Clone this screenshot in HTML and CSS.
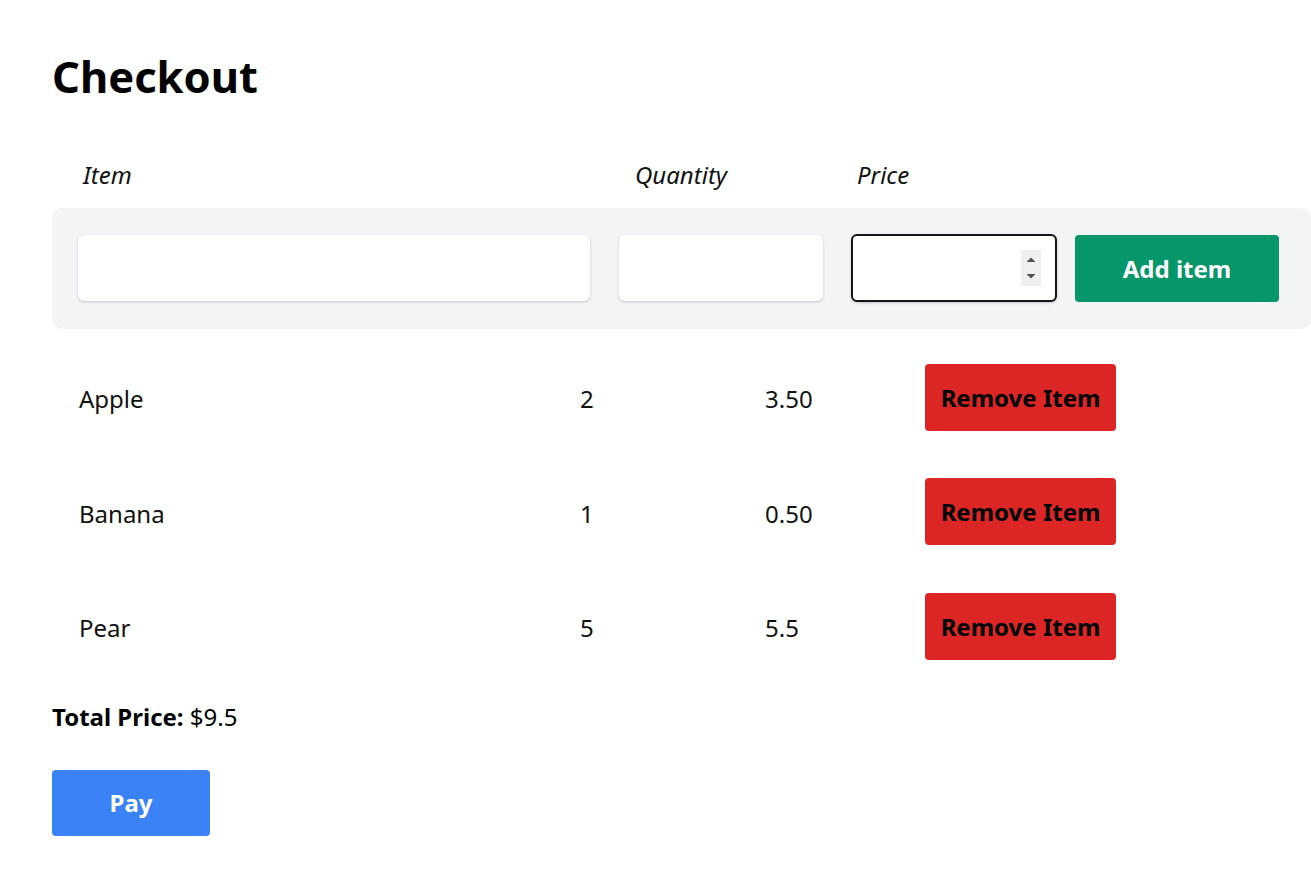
FILE: index.html
```html
<!DOCTYPE html>
<html lang="en">
<head>
<meta charset="utf-8">
<title>Checkout</title>
<link rel="stylesheet" href="styles.css">
</head>
<body>
<main class="page">
  <h1 class="title">Checkout</h1>
  <div class="labels">
    <span>Item</span>
    <span>Quantity</span>
    <span>Price</span>
  </div>
  <form class="form-bar">
    <input class="field field-item" type="text" aria-label="Item">
    <input class="field field-qty" type="text" aria-label="Quantity">
    <div class="price-wrap">
      <input class="field field-price" type="text" aria-label="Price">
      <span class="spinner">
        <svg width="20" height="36" viewBox="0 0 20 36"><path d="M5.5 12 L10 7.5 L14.5 12 Z" fill="#505050"/><path d="M5.5 24 L10 28.5 L14.5 24 Z" fill="#505050"/></svg>
      </span>
    </div>
    <button class="btn btn-add" type="button">Add item</button>
  </form>
  <div class="items">
    <div class="row">
      <span class="name">Apple</span>
      <span class="qty">2</span>
      <span class="price">3.50</span>
      <button class="btn btn-remove" type="button">Remove Item</button>
    </div>
    <div class="row">
      <span class="name">Banana</span>
      <span class="qty">1</span>
      <span class="price">0.50</span>
      <button class="btn btn-remove" type="button">Remove Item</button>
    </div>
    <div class="row">
      <span class="name">Pear</span>
      <span class="qty">5</span>
      <span class="price">5.5</span>
      <button class="btn btn-remove" type="button">Remove Item</button>
    </div>
  </div>
  <p class="total"><strong>Total Price:</strong> $9.5</p>
  <button class="btn btn-pay" type="button">Pay</button>
</main>
</body>
</html>
```
FILE: styles.css
```css
* { box-sizing: border-box; }
html, body { margin: 0; padding: 0; background: #fff; }
body {
  font-family: "Noto Sans", "Open Sans", sans-serif;
  color: #111;
  font-size: 24px;
}
.page {
  padding: 44px 0 0 52px;
}
.title {
  margin: 0;
  font-size: 43.5px;
  line-height: 64px;
  font-weight: 700;
  color: #000;
}
.labels {
  display: grid;
  grid-template-columns: 552px 222px auto;
  padding-left: 31px;
  margin-top: 49px;
  height: 36px;
  line-height: 36px;
  font-style: italic;
  font-size: 24px;
  color: #111;
}
.form-bar {
  display: flex;
  align-items: center;
  width: 1259px;
  margin: 15px 0 0 0;
  padding: 26px 26px 27px 26px;
  background: #f3f4f6;
  border-radius: 10px;
}
.field {
  height: 66px;
  border: 0;
  border-radius: 6px;
  background: #fff;
  box-shadow: 0 1px 3px rgba(0,0,0,0.12), 0 1px 2px rgba(0,0,0,0.08);
  font: inherit;
  padding: 0 12px;
  outline: none;
}
.field-item { width: 512px; margin-right: 29px; }
.field-qty { width: 204px; margin-right: 28px; }
.price-wrap {
  position: relative;
  width: 206px;
  height: 68px;
  margin-right: 18px;
}
.field-price {
  width: 206px;
  height: 68px;
  border: 2px solid #161616;
  border-radius: 6px;
}
.spinner {
  position: absolute;
  left: 170px;
  top: 16px;
  width: 20px;
  height: 36px;
  background: #efefef;
  display: block;
}
.spinner svg { display: block; }
.btn {
  font-family: inherit;
  font-weight: 700;
  font-size: 24px;
  border: 0;
  border-radius: 4px;
  cursor: pointer;
  padding: 0;
}
.btn-add {
  width: 204px;
  height: 67px;
  background: #059669;
  color: #fff;
}
.items {
  margin-top: 11px;
}
.row {
  display: grid;
  grid-template-columns: 501px 185px 160px 191px;
  align-items: center;
  height: 114.5px;
  padding-left: 27px;
}
.row > span { padding-top: 3px; }
.btn-remove {
  width: 191px;
  height: 67px;
  background: #dc2626;
  color: #000;
}
.total {
  margin: 15px 0 0 0;
  line-height: 36px;
  font-size: 24px;
  color: #000;
}
.total strong { font-weight: 700; }
.btn-pay {
  margin-top: 35px;
  width: 158px;
  height: 66px;
  background: #3b82f6;
  color: #fff;
}
```
